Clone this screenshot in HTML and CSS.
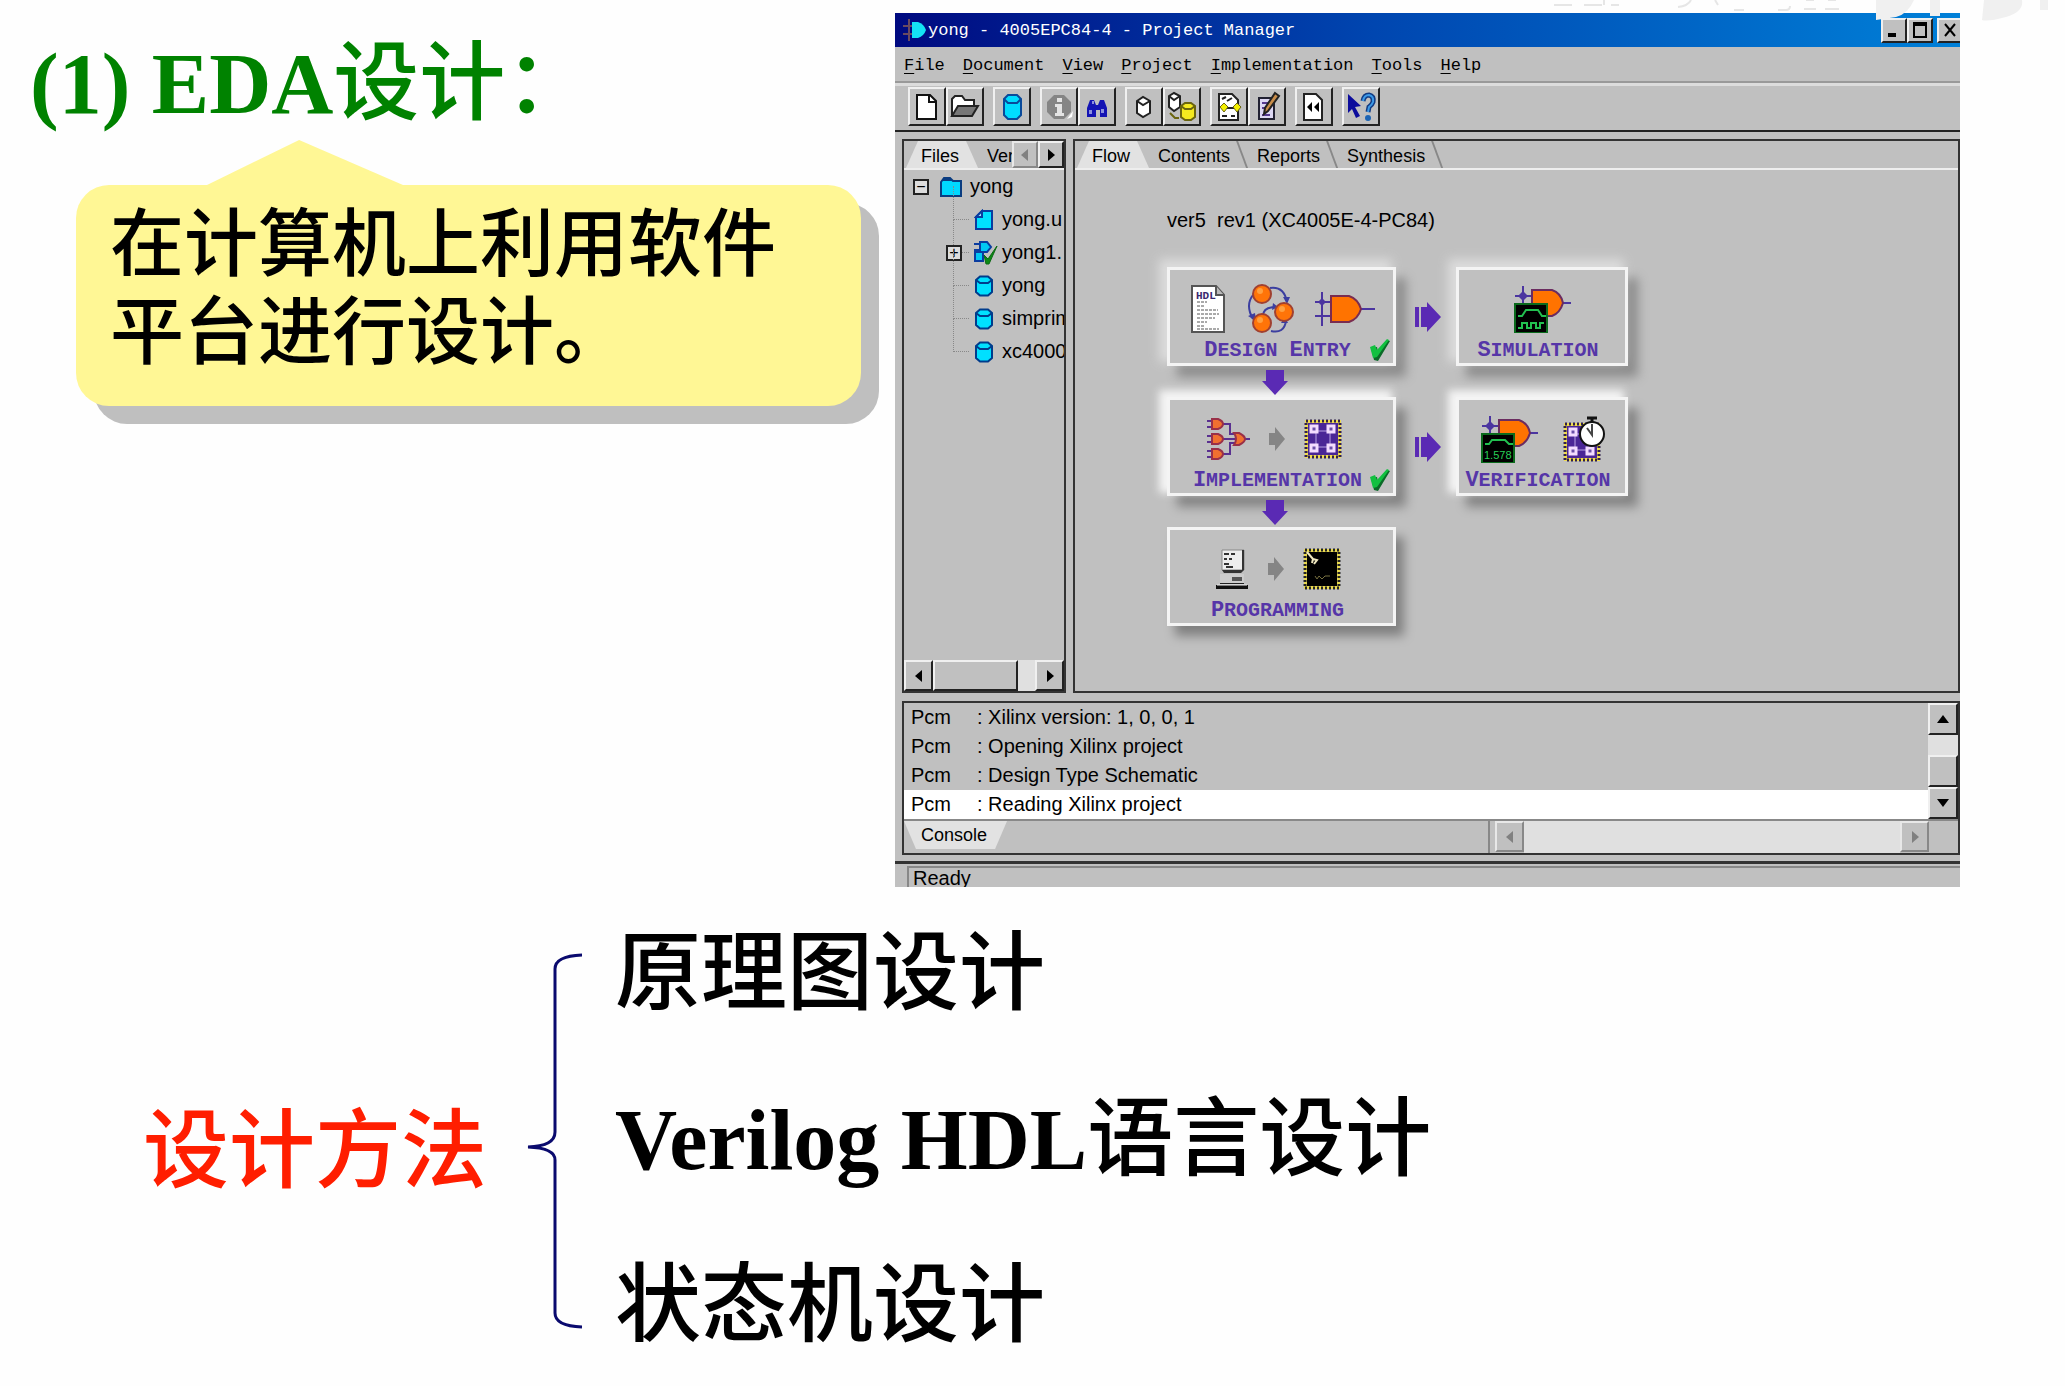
FILE: index.html
```html
<!DOCTYPE html>
<html lang="zh-CN">
<head>
<meta charset="utf-8">
<title>EDA设计</title>
<link rel="stylesheet" href="styles.css">
</head>
<body>
<svg class="defs" aria-hidden="true">
  <symbol id="drum" viewBox="0 0 20 22">
    <path d="M2 5 6 1.500h8L18 5v12l-4 3.500H6L2 17z" fill="#00e0ff"/>
    <path d="M2 5 6 1.500h8L18 5v12l-4 3.500H6L2 17zM2 5l4 3h8l4-3" fill="none" stroke="#003c8c" stroke-width="2"/>
  </symbol>
  <symbol id="gate" viewBox="0 0 60 36">
    <path d="M0 11h16M0 25h16M46 18h14M7 1v34" fill="none" stroke="#4b35a0" stroke-width="2"/>
    <path d="M7 7l4 4-4 4-4-4z" fill="#4b35a0"/>
    <path d="M16 5h18q9 3 12 13-3 10-12 13H16z" fill="#ff7300" stroke="#7a2c50" stroke-width="2"/>
  </symbol>
  <symbol id="scopegate" viewBox="0 0 58 48">
    <path d="M1 11h18M9 1v18M46 18h11" fill="none" stroke="#4b35a0" stroke-width="2"/>
    <path d="M9 6l5 5-5 5-5-5z" fill="#4b35a0"/>
    <path d="M18 5h20q9 3 11 13-3 10-11 13H18z" fill="#ff7300" stroke="#6b2c60" stroke-width="2"/>
    <path d="M1 19h32v29H1z" fill="#000" stroke="#0a6a1c" stroke-width="2"/>
  </symbol>
  <symbol id="chip" viewBox="0 0 38 40">
    <path d="M1 1h36v38H1z" fill="#f0dc50"/>
    <path d="M2 2h34v36H2z" fill="none" stroke="#30204a" stroke-width="3" stroke-dasharray="2 2"/>
    <path d="M4 4h30v32H4z" fill="#4a2696"/>
    <path d="M12 12h14v16H12z" fill="none" stroke="#b9a2e4"/>
    <g fill="#6a50a8" stroke="#f3dcff" stroke-width="3"><path d="M7 7h6v6H7zM24 7h6v6h-6zM7 26h6v6H7zM24 26h6v6h-6z"/></g>
  </symbol>
  <symbol id="check" viewBox="0 0 22 24">
    <path d="M2 10l6-1 1 5L18 2l3 1L9 23 5 22z" fill="#0b6a28"/>
    <path d="M1 9l5-2 2 5L18 1l2 1L8 19l-4 1z" fill="#12c040"/>
  </symbol>
  <symbol id="next" viewBox="0 0 18 26"><path d="M1 7h6V1l10 12L7 25v-6H1z" fill="#858585"/></symbol>
  <symbol id="left" viewBox="0 0 10 14"><path d="M8 1v12L1 7z" fill="currentColor"/></symbol>
  <symbol id="right" viewBox="0 0 10 14"><path d="M2 1v12l7-6z" fill="currentColor"/></symbol>
</svg>

<svg class="watermark" viewBox="0 0 515 26" aria-hidden="true">
  <path d="M4 5h18M34 5h18M54 0v5M61 5h8M128 7q10-1 13-7M165 0l3 5M184 10h10M228 10h8q4 0 4-4M254 9h12M256 0h8M275 9h14M278 0h8" fill="none" stroke="#e6e6e6" stroke-width="2"/>
  <path d="M326 0h38q-6 14-18 17l-20 3zM380 0h10v16h-10zM434 0h38q2 12-16 17t-24 3zM490 0h8v10h-8z" fill="#f0f0f0"/>
</svg>

<main class="slide">
  <section class="top">
    <div class="intro">
      <h1 class="title"><span class="latin">(1) EDA</span>设计：</h1>
      <p class="callout">在计算机上利用软件<br>平台进行设计。</p>
    </div>

    <div class="window">
      <header class="titlebar">
        <svg class="app-icon" viewBox="0 0 24 22"><path d="M0 7h10M0 15h10M6 0v22" stroke="#6a4a60" stroke-width="2"/><path d="M9 3h6q6 2 8 8-2 6-8 8H9z" fill="#14e4f4"/></svg>
        <h2 class="caption">yong - 4005EPC84-4 - Project Manager</h2>
        <div class="controls">
          <button class="ctl" aria-label="Minimize"><svg viewBox="0 0 16 16"><path d="M2 11h8v4H2z"/></svg></button>
          <button class="ctl" aria-label="Maximize"><svg viewBox="0 0 16 16"><path d="M1 0h14v16H1zM3 4v10h10V4z" fill-rule="evenodd"/></svg></button>
          <button class="ctl close" aria-label="Close"><svg viewBox="0 0 16 16"><path d="M3 2l10 12M13 2L3 14" stroke="#000" stroke-width="2"/></svg></button>
        </div>
      </header>

      <nav class="menu">
        <button><u>F</u>ile</button><button><u>D</u>ocument</button><button><u>V</u>iew</button><button><u>P</u>roject</button><button><u>I</u>mplementation</button><button><u>T</u>ools</button><button><u>H</u>elp</button>
      </nav>

      <div class="toolbar">
        <div class="group">
          <button aria-label="New"><svg viewBox="0 0 32 32"><path d="M6 4h13l6 6v18H6z" fill="#fff" stroke="#111" stroke-width="2"/><path d="M18 4v7h7" fill="none" stroke="#111" stroke-width="2"/></svg></button>
          <button aria-label="Open"><svg viewBox="0 0 32 32"><path d="M3 25V8l3-3h7l3 4h9v6" fill="#fff" stroke="#222" stroke-width="2"/><path d="M3 25l6-10h20l-6 10z" fill="#777" stroke="#222" stroke-width="2"/></svg></button>
        </div>
        <div class="group">
          <button aria-label="Library"><svg viewBox="0 0 32 32"><path d="M8 8l4-4h9l4 4v16l-4 4h-9l-4-4z" fill="#00dcff" stroke="#0a4a9a" stroke-width="2"/><path d="M8 8l4 4h9l4-4" fill="none" stroke="#0a4a9a" stroke-width="2"/></svg></button>
        </div>
        <div class="group">
          <button aria-label="Information"><svg viewBox="0 0 32 32"><path d="M24 28l6-8-1 6z" fill="#fff"/><path d="M11 4h10l7 7v10l-7 7H11l-7-7V11z" fill="#858585"/><path d="M14 7h5v4h-5zM12 13h7v9h2v3h-9v-3h2v-6h-2z" fill="#e4e4e4"/></svg></button>
          <button aria-label="Find"><svg viewBox="0 0 32 32"><path d="M6 26V17l3-8h4l2 5h2l2-5h4l3 8v9h-7v-7h-4v7z" fill="#1414b4"/><path d="M8 19h3v4H8zM20 18h3v4h-3zM11 10h2v3h-2z" fill="#8c90e0"/></svg></button>
        </div>
        <div class="group">
          <button aria-label="Device"><svg viewBox="0 0 32 32"><path d="M9 10l6-4 7 4v12l-7 4-6-4z" fill="#fff" stroke="#222" stroke-width="2"/><path d="M9 10l6 4 7-4" fill="none" stroke="#222" stroke-width="2"/></svg></button>
          <button aria-label="Devices"><svg viewBox="0 0 32 32"><path d="M3 5l5-3 6 3v11l-6 4-5-4z" fill="#fff" stroke="#222" stroke-width="2"/><path d="M3 5l5 4 6-4" fill="none" stroke="#222" stroke-width="2"/><path d="M15 15l4-3h6l4 3v11l-4 3h-6l-4-3z" fill="#f5ea20" stroke="#6b6510" stroke-width="2"/><path d="M15 15l4 3h6l4-3M4 22l5 5h4" fill="none" stroke="#6b6510" stroke-width="2"/></svg></button>
        </div>
        <div class="group">
          <button aria-label="Flow report"><svg viewBox="0 0 32 32"><path d="M6 3h13l6 6v20H6z" fill="#fff" stroke="#222" stroke-width="2"/><path d="M9 8l4-2M14 10l5-3M9 25h5M18 25h4M12 17h9" stroke="#222" stroke-width="2"/><path d="M11 12l4 4-4 5-4-5zM24 12l4 4-4 5-4-5z" fill="#f4f000" stroke="#6b6510"/></svg></button>
          <button aria-label="Edit"><svg viewBox="0 0 32 32"><path d="M8 7h15v21H8z" fill="#ddd8f4" stroke="#223" stroke-width="2"/><path d="M11 12h6M11 17h4M11 24h8" stroke="#553a90" stroke-width="2"/><path d="M24 2l4 3-11 15-4 3 1-6z" fill="#c98d4a" stroke="#222" stroke-width="2"/></svg></button>
        </div>
        <div class="group">
          <button aria-label="Rewind"><svg viewBox="0 0 32 32"><path d="M6 3h12l6 6v20H6z" fill="#fff" stroke="#222" stroke-width="2"/><path d="M14 11v10l-5-5zM21 11v10l-5-5z"/></svg></button>
        </div>
        <div class="group">
          <button aria-label="Help pointer"><svg viewBox="0 0 32 32"><path d="M3 3l13 12-6 1 5 9-4 2-4-9-4 4z" fill="#0c0c9c"/><path d="M18 10q1-6 6-6 5 1 4 7-1 3-4 5l-1 5" fill="none" stroke="#123c84" stroke-width="5"/><path d="M18 10q1-6 6-6 5 1 4 7-1 3-4 5l-1 5" fill="none" stroke="#3c9ae8" stroke-width="2"/><circle cx="23" cy="27" r="3" fill="#1c64b4"/></svg></button>
        </div>
      </div>

      <div class="panes">
        <aside class="files">
          <div class="tabs">
            <button class="tab active"><span>Files</span></button><button class="tab cut"><span>Ver</span></button>
            <div class="tab-scroll">
              <button class="sb off" aria-label="Previous tab"><svg><use href="#left"/></svg></button><button class="sb" aria-label="Next tab"><svg><use href="#right"/></svg></button>
            </div>
          </div>
          <ul class="tree">
            <li class="root"><span class="box">−</span><svg class="folder" viewBox="0 0 24 22"><path d="M2 6l3-4h6l3 3h8v15H2z" fill="#00d8ff" stroke="#0a3c80" stroke-width="2"/><path d="M5 2h6l3 3H3z" fill="#0a3c80"/></svg>yong</li>
            <li><svg class="node" viewBox="0 0 20 22"><path d="M2 8l6-6h10v18H2z" fill="#00e0ff" stroke="#0a3ca0" stroke-width="2"/><path d="M8 2v6H2z" fill="#9be8ff" stroke="#0a3ca0" stroke-width="2"/></svg>yong.u</li>
            <li class="has-box"><span class="box">+</span><svg class="node wide" viewBox="0 0 26 24"><path d="M1 3h8M1 9h6" stroke="#0a3ca0" stroke-width="2"/><path d="M7 1h7l4 5-4 5H7zM2 11h8v9H2z" fill="#00c8f4" stroke="#0a3ca0" stroke-width="2"/><path d="M11 14l4 4 9-13-8 18-3 0z" fill="#0c8a14" stroke="#0c6a14"/></svg>yong1.</li>
            <li><svg class="node"><use href="#drum"/></svg>yong</li>
            <li><svg class="node"><use href="#drum"/></svg>simprim</li>
            <li><svg class="node"><use href="#drum"/></svg>xc4000</li>
          </ul>
          <div class="hscroll">
            <button class="sb" aria-label="Scroll left"><svg><use href="#left"/></svg></button><span class="thumb"></span><span class="track"></span><button class="sb" aria-label="Scroll right"><svg><use href="#right"/></svg></button>
          </div>
        </aside>

        <section class="project">
          <div class="tabs">
            <button class="tab active"><span>Flow</span></button><button class="tab"><span>Contents</span></button><button class="tab"><span>Reports</span></button><button class="tab"><span>Synthesis</span></button>
          </div>
          <p class="version">ver5&nbsp; rev1 (XC4005E-4-PC84)</p>
          <div class="flow">
            <button class="card glow">
              <span class="icons">
                <svg width="34" height="48" viewBox="0 0 34 48"><path d="M1 1h24l8 9v37H1z" fill="#fff" stroke="#555" stroke-width="2"/><path d="M25 1v9h8" fill="#bbb" stroke="#555" stroke-width="2"/><path d="M6 17h10M6 21h7M6 25h21M6 29h22M6 33h18M6 37h10M6 41h8M6 44h22" stroke="#555" stroke-dasharray="3 1"/><text x="5" y="14" font-size="11" class="hdl">HDL</text></svg>
                <svg width="50" height="52" viewBox="0 0 50 52"><g fill="none" stroke="#3c3fa0" stroke-width="2"><path d="M8 12q-8 10 0 24M25 5q14-2 17 14M18 33q0-9 13-9M26 48q13 3 15-10"/></g><path d="M3 33l8 5-1-8zM38 14l4 7 3-7zM28 20l5 4-6 3zM36 40l4-6 3 6z" fill="#3c3fa0"/><g fill="#ff7408" stroke="#a04030" stroke-width="2"><circle cx="17" cy="11" r="9"/><circle cx="39" cy="29" r="9"/><circle cx="17" cy="40" r="9"/></g><g fill="#ffa040"><circle cx="15" cy="8" r="3"/><circle cx="37" cy="26" r="3"/><circle cx="15" cy="37" r="3"/></g></svg>
                <svg width="60" height="36"><use href="#gate"/></svg>
              </span>
              <span class="label"><b>D</b>ESIGN <b>E</b>NTRY</span>
              <svg class="check"><use href="#check"/></svg>
            </button>
            <svg class="arrow-r" viewBox="0 0 28 32"><path d="M1 6h4v20H1zM7 6h6V1l14 15-14 15v-5H7z"/></svg>
            <button class="card glow">
              <span class="icons"><svg width="58" height="48" viewBox="0 0 58 48"><use href="#scopegate" width="58" height="48"/><path d="M4 31h4l4-6h12l4 6h4M4 43h4v-5h5v5h4v-5h5v5h4v-5h4" fill="none" stroke="#22c050" stroke-width="2"/></svg></span>
              <span class="label"><b>S</b>IMULATION</span>
            </button>

            <svg class="arrow-d" viewBox="0 0 28 26"><path d="M5 1h18v11h4L14 26 1 12h4z"/></svg>

            <button class="card glow strong row2">
              <span class="icons wide">
                <svg width="44" height="44" viewBox="0 0 44 44"><path d="M1 4h6M1 10h6M1 19h6M1 25h6M1 34h6M1 40h6M16 7h8v10h6M16 22h14M16 37h8V26h6M38 22h6" fill="none" stroke="#5a3090" stroke-width="2"/><g fill="#f07030" stroke="#9a3048" stroke-width="2"><path d="M6 2h6q5 2 5 5t-5 5H6zM6 17h6q5 2 5 5t-5 5H6zM6 32h6q5 2 5 5t-5 5H6zM28 16q4 6 0 12h5q6-3 6-6t-6-6z"/></g></svg>
                <svg width="18" height="26"><use href="#next"/></svg>
                <svg width="38" height="40"><use href="#chip"/></svg>
              </span>
              <span class="label"><b>I</b>MPLEMENTATION</span>
              <svg class="check"><use href="#check"/></svg>
            </button>
            <svg class="arrow-r row2" viewBox="0 0 28 32"><path d="M1 6h4v20H1zM7 6h6V1l14 15-14 15v-5H7z"/></svg>
            <button class="card glow strong row2">
              <span class="icons mid">
                <svg width="58" height="48" viewBox="0 0 58 48"><use href="#scopegate" width="58" height="48"/><path d="M4 29h4l3-4h13l4 4h4" fill="none" stroke="#22c050" stroke-width="2"/><text x="3" y="44" font-size="11" class="reading">1.578</text></svg>
                <svg width="42" height="46" viewBox="0 0 42 46"><use href="#chip" y="6" width="38" height="40"/><path d="M24 2h10M29 2v4" stroke="#111" stroke-width="3"/><circle cx="29" cy="18" r="12" fill="#fff" stroke="#111" stroke-width="2"/><path d="M24 12l5 7V8" fill="none" stroke="#444" stroke-width="2"/></svg>
              </span>
              <span class="label"><b>V</b>ERIFICATION</span>
            </button>

            <svg class="arrow-d row2" viewBox="0 0 28 26"><path d="M5 1h18v11h4L14 26 1 12h4z"/></svg>

            <button class="card row3">
              <span class="icons wide">
                <svg width="34" height="42" viewBox="0 0 34 42"><path d="M7 2h22v20H7z" fill="#eee" stroke="#888"/><path d="M29 2v20l-3 3H9l-2-3h20V2z" fill="#333"/><path d="M9 6h5M16 6h4M9 11h3M14 11h3M9 16h5M11 19h7" stroke="#333" stroke-width="2"/><path d="M5 26h24v9H5z" fill="#ccc"/><path d="M17 29h10v4H17z" fill="#555"/><path d="M29 25v10H5v1h24z" fill="#222"/><path d="M1 37h32v4H1z" fill="#111"/><path d="M2 37h30" stroke="#eee"/></svg>
                <svg width="18" height="26"><use href="#next"/></svg>
                <svg width="38" height="42" viewBox="0 0 38 42"><path d="M1 1h36v40H1z" fill="#e8d850"/><path d="M2 2h34v38H2z" fill="none" stroke="#222" stroke-width="3" stroke-dasharray="2 2"/><path d="M4 4h30v34H4z"/><path d="M4 4l6 7 4 1-3 4M10 11l-1 4" fill="none" stroke="#f0e8c0" stroke-width="2"/><path d="M12 28l2 3 2-3 3 3 3-3 5 0" fill="none" stroke="#777040"/></svg>
              </span>
              <span class="label"><b>P</b>ROGRAMMING</span>
            </button>
          </div>
        </section>
      </div>

      <section class="console">
        <div class="log">
          <ul class="lines">
            <li><span>Pcm</span>: Xilinx version: 1, 0, 0, 1</li>
            <li><span>Pcm</span>: Opening Xilinx project</li>
            <li><span>Pcm</span>: Design Type Schematic</li>
            <li class="current"><span>Pcm</span>: Reading Xilinx project</li>
          </ul>
          <div class="vscroll">
            <button class="sb" aria-label="Scroll up"><svg viewBox="0 0 14 10"><path d="M1 9h12L7 1z"/></svg></button><span class="track"></span><span class="thumb"></span><button class="sb" aria-label="Scroll down"><svg viewBox="0 0 14 10"><path d="M1 1h12L7 9z"/></svg></button>
          </div>
        </div>
        <div class="console-bar">
          <button class="tab bottom"><span>Console</span></button>
          <div class="console-scroll">
            <button class="sb off" aria-label="Scroll left"><svg><use href="#left"/></svg></button><span class="track"></span><button class="sb off" aria-label="Scroll right"><svg><use href="#right"/></svg></button>
          </div>
        </div>
      </section>

      <footer class="status"><p>Ready</p></footer>
    </div>
  </section>

  <section class="methods">
    <h2 class="methods-name">设计方法</h2>
    <svg class="brace" viewBox="0 0 56 378" preserveAspectRatio="none" aria-hidden="true"><path d="M55 3Q28 4 28 17V180Q28 194 1 195Q28 196 28 208V361Q28 374 55 375"/></svg>
    <ul class="methods-list">
      <li>原理图设计</li>
      <li><span class="latin">Verilog HDL</span>语言设计</li>
      <li>状态机设计</li>
    </ul>
  </section>
</main>
</body>
</html>
```
FILE: styles.css
```css
* { box-sizing: border-box; margin: 0; padding: 0; }

body {
  background: #fefefe;
  color: #000;
  font-family: "Liberation Sans", Arial, sans-serif;
}

ul { list-style: none; }

button {
  border: 0;
  background: none;
  color: inherit;
  font: inherit;
}

svg { display: block; }

.defs { position: absolute; width: 0; height: 0; }

.watermark {
  position: absolute;
  z-index: 1;
  top: 0;
  right: 0;
  width: 515px;
  height: 26px;
}

/* Slide text */
.top {
  display: grid;
  grid-template-columns: 895fr 1065fr;
  padding: 13px 105px 0 0;
}

.title, .methods-name, .methods-list {
  font-family: "Noto Sans CJK SC", sans-serif;
  font-size: 86px;
  font-weight: 500;
  white-space: nowrap;
}

.latin { font-family: "Liberation Serif", serif; font-weight: 700; line-height: 1; }

.title {
  padding-left: 30px;
  color: #008200;
  line-height: 126px;
}

.callout {
  position: relative;
  width: 785px;
  max-width: 88%;
  margin: 46px 0 0 76px;
  padding: 9px 34px 36px;
  border-radius: 33px;
  background: #fff795;
  box-shadow: 18px 18px 0 #bfbfbf;
  font: 500 74px/88px "Noto Sans CJK SC", sans-serif;
  white-space: nowrap;
}

.callout::before {
  content: "";
  position: absolute;
  left: 131px;
  bottom: 100%;
  width: 196px;
  height: 45px;
  background: inherit;
  clip-path: polygon(47% 0, 100% 100%, 0 100%);
}

.methods {
  display: flex;
  align-items: center;
  margin-top: -4px;
  padding-left: 143px;
}

.methods-name { padding-top: 24px; color: #ff1e00; line-height: 88px; }

.brace {
  width: 56px;
  height: 378px;
  margin: 18px 32px 0 40px;
  fill: none;
  stroke: #0a0a6e;
  stroke-width: 3;
}

.methods-list li { line-height: 166px; }

/* Application window */
.window {
  display: flex;
  flex-direction: column;
  overflow: hidden;
  background: #c0c0c0;
}

.titlebar {
  display: flex;
  align-items: center;
  height: 34px;
  padding-left: 8px;
  background: linear-gradient(90deg, #000a80, #0046b0 45%, #0080d8);
  color: #fff;
}

.app-icon { width: 24px; height: 22px; margin-right: 1px; }

.caption { flex: 1; padding-top: 2px; font: 17px/32px "Liberation Mono", monospace; }

.controls { display: flex; }

.ctl, .sb, .thumb, .toolbar button {
  display: flex;
  align-items: center;
  justify-content: center;
  background: #c0c0c0;
  border: solid;
  border-width: 2px;
  border-color: #f0f0f0 #222 #222 #f0f0f0;
}

.ctl { width: 26px; height: 25px; }
.ctl svg { width: 16px; height: 16px; }
.close { width: 23px; margin-left: 4px; border-right: 0; }

.menu {
  display: flex;
  gap: 18px;
  height: 36px;
  padding-left: 9px;
  border-bottom: 2px solid #999;
  font: 17px/38px "Liberation Mono", monospace;
}

.menu u { text-underline-offset: 3px; }

.toolbar {
  display: flex;
  gap: 9px;
  height: 49px;
  padding: 1px 13px;
  border-top: 3px solid #dcdcdc;
  border-bottom: 2px solid #222;
}

.group { display: flex; }
.toolbar button { width: 38px; height: 39px; }
.toolbar svg { width: 32px; height: 32px; }

.panes {
  display: grid;
  grid-template-columns: 164px 1fr;
  gap: 7px;
  height: 554px;
  margin: 7px 0 0 7px;
}

.files, .project {
  display: flex;
  flex-direction: column;
  min-width: 0;
  border: 2px solid #333;
}

.tabs {
  position: relative;
  display: flex;
  height: 29px;
  padding-left: 2px;
  border-bottom: 2px solid #eee;
  overflow: hidden;
}

.tab {
  position: relative;
  padding: 0 15px;
  font-size: 18px;
  line-height: 30px;
}

.tab + .tab { padding: 0 14px 0 13px; }

.tab::before {
  content: "";
  position: absolute;
  inset: 0 -4px 0 0;
  background: linear-gradient(#888, #888);
  clip-path: polygon(calc(100% - 12px) 0, calc(100% - 10px) 0, 100% 100%, calc(100% - 2px) 100%);
}

.tab.active::before {
  background: #e2e2e2;
  clip-path: polygon(12px 0, calc(100% - 12px) 0, 100% 100%, 0 100%);
}

.tab span { position: relative; }

.tab-scroll {
  position: absolute;
  top: 0;
  right: 0;
  display: flex;
}

.sb { flex: none; width: 29px; height: 31px; }
.sb svg { width: 10px; height: 14px; }
.tab-scroll .sb { width: 26px; height: 27px; }
.off { color: #808080; border-color: #e8e8e8 #888 #888 #e8e8e8; }

.tree { flex: 1; font-size: 20px; overflow: hidden; }

.tree li {
  position: relative;
  display: flex;
  align-items: center;
  height: 33px;
  padding-left: 70px;
  white-space: nowrap;
}

.tree .root { padding-left: 9px; }
.tree .has-box { padding-left: 42px; }

.tree li:not(.root)::before {
  content: "";
  position: absolute;
  left: 49px;
  top: -17px;
  width: 15px;
  height: 33px;
  border: 1px dotted #888;
  border-width: 0 0 1px 1px;
}

.box {
  position: relative;
  flex: none;
  width: 16px;
  height: 16px;
  border: 2px solid #222;
  background: #ddd;
  font-size: 16px;
  line-height: 12px;
  text-align: center;
}

.folder { flex: none; width: 24px; height: 22px; margin: 0 7px 0 10px; }
.node { flex: none; width: 20px; height: 22px; margin-right: 8px; }
.has-box .node { width: 26px; height: 24px; margin: 0 3px 0 11px; }

.hscroll { display: flex; }
.hscroll .thumb { flex: 1; }
.track { background: #e0e0e0; }
.hscroll .track { width: 17px; }

.version { padding: 35px 0 0 92px; font-size: 20px; line-height: 30px; }

.flow {
  display: grid;
  grid-template-columns: 229px 60px 172px;
  grid-template-rows: 99px 31px 99px 31px 99px;
  padding: 32px 0 0 92px;
  justify-items: center;
  align-items: center;
}

.arrow-r { width: 28px; height: 32px; margin-left: 4px; }
.arrow-d { width: 28px; height: 26px; grid-row: 2; grid-column: 1; justify-self: start; margin-left: 94px; }
.arrow-d.row2 { grid-row: 4; }
.arrow-r, .arrow-d { z-index: 1; fill: #5a2ab4; }
.flow > .row2:not(.arrow-d) { grid-row: 3; }
.row3 { grid-row: 5; }

.card {
  position: relative;
  display: flex;
  flex-direction: column;
  align-items: center;
  justify-content: flex-end;
  width: 100%;
  height: 99px;
  padding: 0 8px 0 0;
  border: 3px solid #f4f4f4;
  background: #c0c0c0;
  box-shadow: 8px 10px 10px #808080;
}

.glow { box-shadow: -6px -6px 10px 2px #dcdcdc, 10px 11px 10px #8c8c8c; }
.strong { box-shadow: -6px -5px 8px 2px #f4f4f4, 10px 11px 10px #848484; }

.icons {
  flex: 1;
  display: flex;
  align-items: center;
  justify-content: center;
  gap: 20px;
  padding: 8px 0 0 10px;
}

.icons.wide { gap: 18px; padding-left: 0; }
.row2 .icons.wide { padding-right: 8px; }
.icons.mid { gap: 24px; }

.label {
  color: #5636a8;
  font: 700 20px/24px "Liberation Mono", monospace;
}

.label b { font-size: 22px; }

.check { position: absolute; right: 2px; bottom: 1px; width: 22px; height: 24px; }

.hdl { fill: #3a2870; font-family: "Liberation Mono", monospace; font-weight: 700; }
.reading { fill: #28d058; }

/* Console */
.console {
  margin: 8px 0 0 7px;
  border: 2px solid #333;
  font-size: 20px;
}

.log { display: flex; height: 116px; }
.lines { flex: 1; }
.lines li { display: flex; padding-left: 7px; line-height: 29px; }
.lines span { width: 66px; }
.lines .current { background: #fff; }

.vscroll { display: flex; flex-direction: column; width: 30px; }
.vscroll .sb, .vscroll .thumb { width: 30px; height: 32px; }
.vscroll .sb svg { width: 14px; height: 10px; }
.vscroll .track { flex: 1; }

.console-bar {
  display: flex;
  justify-content: space-between;
  height: 34px;
  padding-right: 29px;
  border-top: 2px solid #888;
}

.tab.bottom { height: 28px; padding: 0 20px 0 17px; line-height: 28px; }

.tab.bottom::before {
  inset: 0;
  background: #e2e2e2;
  clip-path: polygon(0 0, 100% 0, calc(100% - 12px) 100%, 12px 100%);
}

.console-scroll {
  display: flex;
  width: 43%;
  padding-left: 5px;
  border-left: 2px solid #888;
}

.console-scroll .track { flex: 1; }

.status {
  height: 26px;
  margin-top: 6px;
  padding: 2px 0 0 12px;
  border-top: 3px solid #333;
  overflow: hidden;
}

.status p {
  padding-left: 4px;
  border: solid #888;
  border-width: 2px 0 0 2px;
  font-size: 20px;
  line-height: 20px;
}
```
